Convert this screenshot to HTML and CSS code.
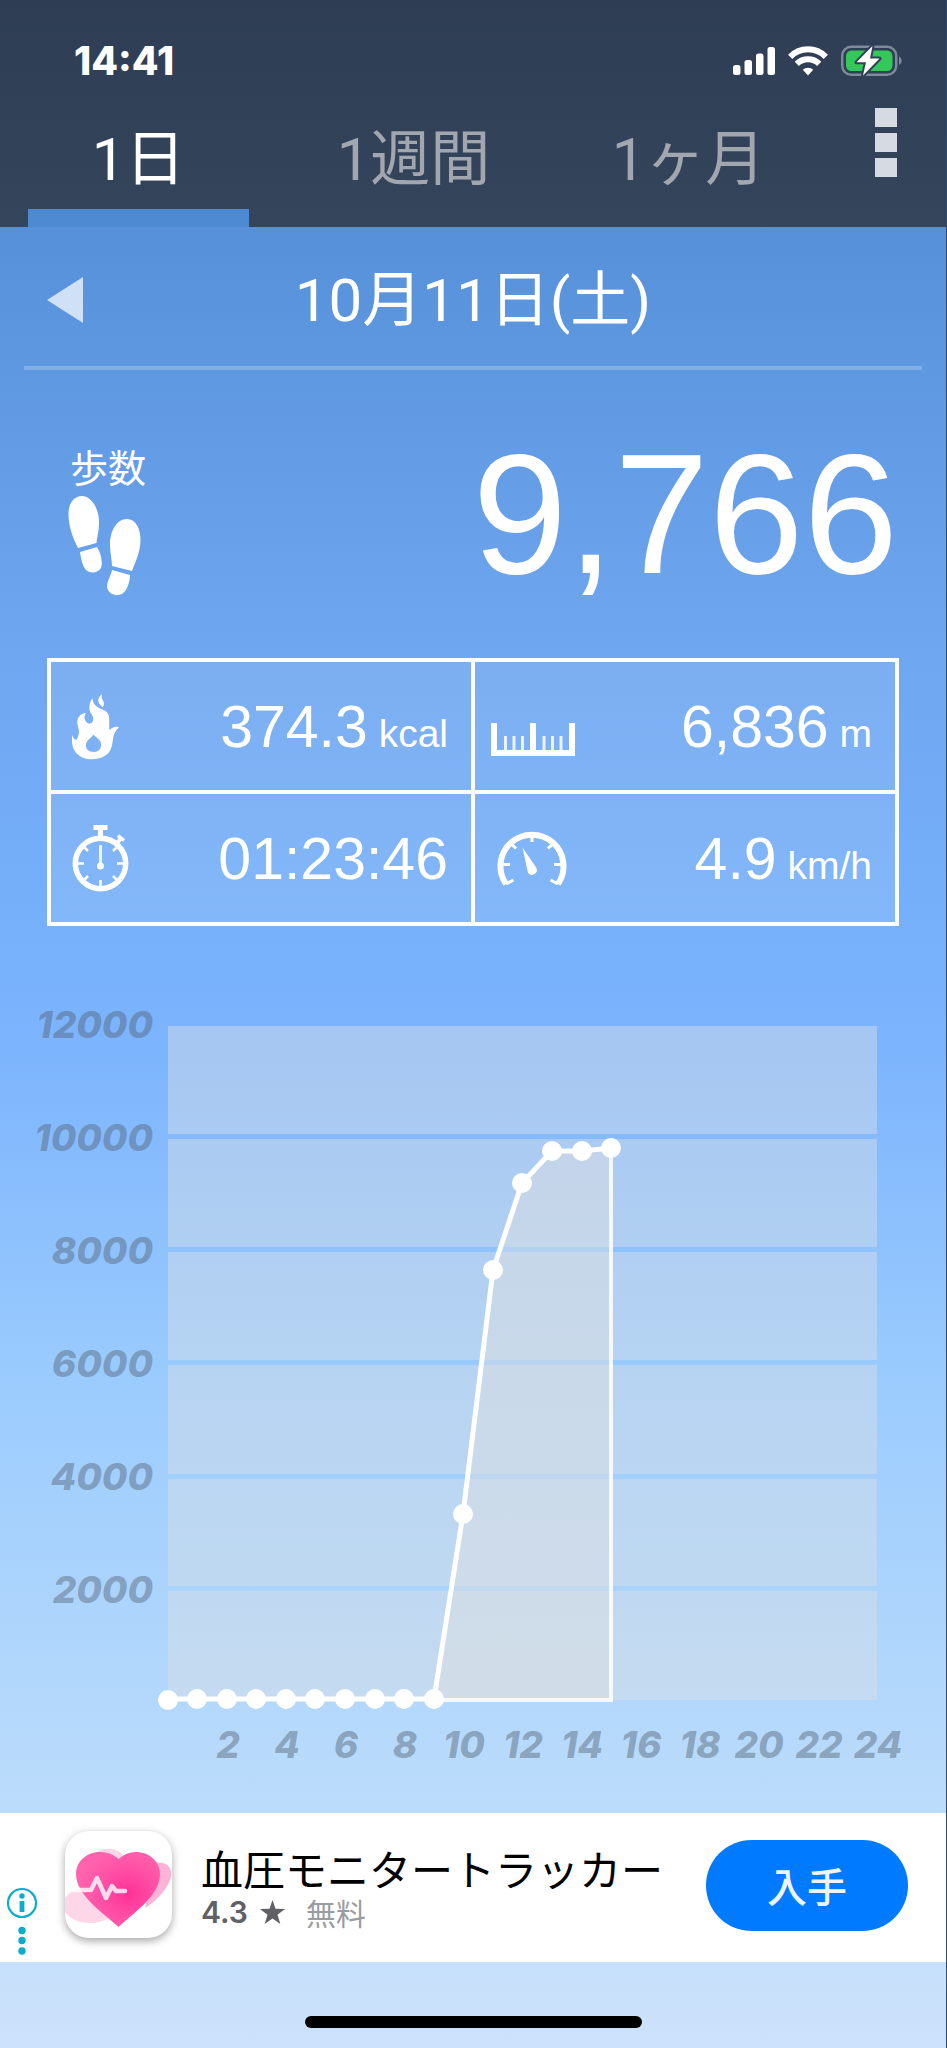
FILE: index.html
```html
<!DOCTYPE html>
<html lang="ja">
<head>
<meta charset="utf-8">
<meta name="viewport" content="width=device-width, initial-scale=1">
<title>歩数計</title>
<link rel="stylesheet" href="styles.css">
</head>
<body>
<div class="app">
  <header class="header">
    <div class="status">
      <time class="clock">14:41</time>
      <div class="indicators">
        <svg width="42" height="30" viewBox="0 0 42 30" fill="#fff" aria-label="電波"><rect x="0" y="19" width="7.500" height="10" rx="2.500"/><rect x="11.500" y="14" width="7.500" height="15" rx="2.500"/><rect x="23" y="7.500" width="7.500" height="21.500" rx="2.500"/><rect x="34.500" y="1" width="7.500" height="28" rx="2.500"/></svg>
        <svg width="40" height="30" viewBox="0 0 40 30" aria-label="Wi-Fi"><g fill="none" stroke="#fff" stroke-width="6"><path d="M2.200 10.800a25 25 0 0 1 35.600 0"/><path d="M8.800 17.800a16 16 0 0 1 22.400 0"/></g><path d="M20 29.500l-5.200-5.700a7.500 7.500 0 0 1 10.400 0z" fill="#fff"/></svg>
        <svg width="62" height="32" viewBox="0 0 62 32" aria-label="充電中"><rect x="1.200" y="1.700" width="54" height="28" rx="9" fill="none" stroke="#7f8a9a" stroke-width="2.400"/><path d="M58 11.500c3.500 1.500 3.500 7 0 8.500z" fill="#7f8a9a"/><rect x="5" y="5.500" width="46.500" height="20.500" rx="5.500" fill="#34c759"/><path d="M31.500 1L15.500 17.300h9.500L22 30.500 38.500 13.500h-9.500z" fill="#fff" stroke="#30425a" stroke-width="4" stroke-linejoin="round" paint-order="stroke"/></svg>
      </div>
    </div>
    <nav class="tabs">
      <button class="tab tab-active" type="button">1日</button>
      <button class="tab" type="button">1週間</button>
      <button class="tab" type="button">1ヶ月</button>
      <button class="menu" type="button" aria-label="メニュー"><span></span><span></span><span></span></button>
    </nav>
  </header>

  <main>
    <div class="datebar">
      <button class="prev" type="button" aria-label="前の日"><svg width="36" height="46" viewBox="0 0 36 46"><path d="M0 23L36 0v46z" fill="#cfe0f7"/></svg></button>
      <h1 class="date">10月11日(土)</h1>
    </div>

    <section class="steps">
      <div class="steps-label">
        <h2>歩数</h2>
        <svg width="74" height="100" viewBox="68 496 74 100" fill="#fff"><path d="M82 496C91 496 99 508 99 522C99 532 97 537 96.500 543L78 548C74 540 68.500 528 68.500 514C68.500 503 74 496 82 496Z"/><path d="M80 552L97 547C101 553 103 563 101 568C98 573 90 574 86 570C82 565 81 558 80 552Z"/><path d="M127 519C136 519 140.500 529 140.500 540C140.500 552 135 563 132 571L112 566C112 560 110 553 110 545C110 530 117 519 127 519Z"/><path d="M112 570L130 575C130 582 127 591 122 594C116 597 108 594 107 587C107 581 111 576 112 570Z"/></svg>
      </div>
      <p class="steps-count">9,766</p>
    </section>

    <section class="stats">
      <div class="stat">
        <div class="stat-icon"><svg width="47" height="67" viewBox="126 155 142 200" fill="#fff" fill-rule="evenodd"><path d="M188 170C178 182 176 200 181 212C190 224 194 235 186 244C178 250 166 244 164 230C163 222 166 216 170 214C152 214 140 228 142 246C146 262 150 272 144 286C142 296 136 298 132 292C129 288 127 284 126 280C124 300 126 318 138 334C152 350 172 354 186 354C214 354 234 342 242 326C250 310 248 296 252 282C256 270 262 262 268 257C256 254 246 258 240 266C236 256 240 240 238 226C236 212 226 206 214 202C198 196 188 186 188 170ZM190 279C186 290 168 296 168 312C168 326 178 332 192 332C206 332 215 322 214 308C212 292 200 290 190 279Z"/><path d="M217 157C208 164 203 172 206 180C208 188 214 190 218 197C224 192 224 182 219 176C215 170 215 164 217 157Z"/></svg></div>
        <p class="value">374.3<small> kcal</small></p>
      </div>
      <div class="stat">
        <div class="stat-icon stat-icon-ruler"><svg width="84" height="33" viewBox="0 0 84 33" fill="#fff"><path d="M0 0h6v27h33V0h6v27h33V0h6v33H0z"/><path d="M13 13h3v15h-3zM21.500 13h3v15h-3zM30 13h3v15h-3zM51.500 13h3v15h-3zM60 13h3v15h-3zM68.500 13h3v15h-3z" opacity=".85"/></svg></div>
        <p class="value">6,836<small> m</small></p>
      </div>
      <div class="stat">
        <div class="stat-icon"><svg width="57" height="67" viewBox="0 0 57 67" fill="none" stroke="#fff"><circle cx="28.500" cy="38.500" r="25.200" stroke-width="5.500"/><path d="M21.500 2.500h14M28.500 2v10" stroke-width="5"/><path d="M45 18l4.500-5.500" stroke-width="4"/><path d="M46 10.500l6 5" stroke-width="3.500"/><path d="M28.500 20v21" stroke-width="3" opacity=".85"/><path d="M6 38.500h6M45 38.500h6M28.500 55v6M12.500 22.500l3.500 3.500M44.500 22.500l-3.500 3.500M12.500 54.500l3.500-3.500M44.500 54.500l-3.500-3.500" stroke-width="2.500"/><circle cx="28.500" cy="41" r="3.500" fill="#fff" stroke="none"/></svg></div>
        <p class="value">01:23:46</p>
      </div>
      <div class="stat">
        <div class="stat-icon stat-icon-gauge"><svg width="70" height="57" viewBox="0 0 70 57" fill="none" stroke="#fff"><path d="M9 54A31.500 31.500 0 1 1 61 54" stroke-width="6"/><path d="M35 4v8M4 34.500h9M57 34.500h9M13 12.500l6 6M57 12.500l-6 6M9 54l7.500-4M61 54l-7.500-4" stroke-width="3"/><path d="M25.500 17.500L39.500 38A5 5 0 0 1 31 43Z" fill="#fff" stroke="none"/></svg></div>
        <p class="value">4.9<small> km/h</small></p>
      </div>
    </section>

    <svg class="chart" viewBox="0 926 946 887" role="img" aria-label="時間ごとの歩数">
      <g class="bands">
        <rect x="168" y="1026" width="709" height="108"/><rect x="168" y="1139" width="709" height="108"/><rect x="168" y="1252" width="709" height="108"/><rect x="168" y="1365" width="709" height="109"/><rect x="168" y="1479" width="709" height="107"/><rect x="168" y="1591" width="709" height="109"/>
      </g>
      <path class="area" d="M434 1699L463 1514L493 1270L522 1183L552 1150H582L611 1148V1699Z"/>
      <path class="edge" d="M434 1700H611V1148"/>
      <path class="line" d="M168 1699H434L463 1514L493 1270L522 1183L552 1151H582L611 1148"/>
      <g fill="#fff">
        <circle cx="168" cy="1700" r="10"/><circle cx="197" cy="1699" r="10"/><circle cx="227" cy="1699" r="10"/><circle cx="256" cy="1699" r="10"/><circle cx="286" cy="1699" r="10"/><circle cx="315" cy="1699" r="10"/><circle cx="345" cy="1699" r="10"/><circle cx="375" cy="1699" r="10"/><circle cx="404" cy="1699" r="10"/><circle cx="434" cy="1699" r="10"/><circle cx="463" cy="1514" r="10"/><circle cx="493" cy="1270" r="10"/><circle cx="522" cy="1183" r="10"/><circle cx="552" cy="1151" r="10"/><circle cx="582" cy="1151" r="10"/><circle cx="611" cy="1148" r="10"/>
      </g>
      <g class="axis axis-y">
        <text x="153" y="1038">12000</text><text x="153" y="1151">10000</text><text x="153" y="1264">8000</text><text x="153" y="1377">6000</text><text x="153" y="1490">4000</text><text x="153" y="1603">2000</text>
      </g>
      <g class="axis axis-x">
        <text x="228" y="1758">2</text><text x="287" y="1758">4</text><text x="346" y="1758">6</text><text x="405" y="1758">8</text><text x="464" y="1758">10</text><text x="523" y="1758">12</text><text x="582" y="1758">14</text><text x="641" y="1758">16</text><text x="700" y="1758">18</text><text x="759" y="1758">20</text><text x="819" y="1758">22</text><text x="878" y="1758">24</text>
      </g>
    </svg>
  </main>

  <aside class="ad">
    <button class="ad-info" type="button" aria-label="広告について"><svg width="32" height="70" viewBox="0 0 32 70" fill="#0cadcb"><circle cx="16" cy="16" r="14" fill="none" stroke="#0cadcb" stroke-width="2.200"/><circle cx="16" cy="9" r="2.700"/><path d="M13.600 14h4.800v11h-4.800z"/><circle cx="16" cy="43.500" r="3.700"/><circle cx="16" cy="53.500" r="3.700"/><circle cx="16" cy="64" r="3.700"/></svg></button>
    <svg class="ad-icon" viewBox="0 0 107 107">
      <defs><radialGradient id="heart" cx=".62" cy=".55" r=".6"><stop offset="0" stop-color="#ff2f96"/><stop offset=".5" stop-color="#ff4ea4"/><stop offset="1" stop-color="#ff63ae"/></radialGradient></defs>
      <ellipse cx="25" cy="74" rx="27" ry="18" fill="#fdd6e8"/>
      <path d="M30 22c10-7 22-5 28 2l-10 8z" fill="#fdd3e6"/>
      <path d="M90 32c10-2 18 4 16 14-3 12-15 24-26 31z" fill="#fdb3d5"/>
      <path d="M53.500 96C40 83 11 65 11 43C11 30 22 21 35 21C43 21 49 24 53.500 28C58 24 64 21 71 21C84 21 95 30 95 43C95 65 67 83 53.500 96Z" fill="url(#heart)"/>
      <path d="M9 59H26L32 47L41 67L47 55L51 60H60" fill="none" stroke="#fff" stroke-opacity=".8" stroke-width="4.500" stroke-linecap="round" stroke-linejoin="round"/>
    </svg>
    <div class="ad-text">
      <p class="ad-title">血圧モニタートラッカー</p>
      <p class="ad-meta"><b>4.3</b><svg width="25" height="24" viewBox="0 0 25 24" fill="#616165" aria-label="つ星"><path d="M12.500 0l3 8.700 9.500.3-7.500 5.700 2.800 9.300-7.800-5.500-7.800 5.500 2.800-9.300L0 9l9.500-.3z"/></svg><span>無料</span></p>
    </div>
    <button class="ad-get" type="button">入手</button>
  </aside>

  <footer class="home"><span class="home-bar"></span></footer>
</div>
</body>
</html>
```
FILE: styles.css
```css
* { box-sizing: border-box; }

body, h1, h2, p { margin: 0; }

body {
  font-family: "Liberation Sans", "Noto Sans CJK JP", sans-serif;
  color: #fff;
}

button {
  font: inherit;
  color: inherit;
  background: none;
  border: 0;
  padding: 0;
}

svg { display: block; }

.app {
  display: flex;
  flex-direction: column;
  min-height: 100vh;
  border-right: 1px solid #2f4a6b;
  background: linear-gradient(#4a84ca 0%, #5690d8 11%, #5f99e1 19%, #6ea6ef 31%, #77b1fb 46%, #7cb4fd 51%, #9acbfe 67%, #bbdcfb 88%, #cde2fb 100%);
}

.header { background: linear-gradient(#2e3d53, #34455c); }

.status {
  display: flex;
  align-items: center;
  justify-content: space-between;
  height: 96px;
  padding: 25px 43px 0 74px;
}

.clock {
  font: 800 39px/40px Inter, sans-serif;
}

.indicators {
  display: flex;
  align-items: center;
  gap: 13px;
}

.tabs {
  display: flex;
  gap: 54px;
  height: 131px;
  padding-left: 28px;
}

.tab {
  flex: 1;
  font-family: Roboto, "Noto Sans CJK JP", sans-serif;
  font-size: 60px;
  font-weight: 400;
  line-height: 90px;
  padding: 18px 0 4px;
  border-bottom: 18px solid transparent;
  color: #a2a6ae;
}

.tab-active {
  color: #fff;
  border-bottom-color: #4e8ad1;
}

.menu {
  display: flex;
  flex-direction: column;
  gap: 6px;
  width: 93px;
  padding: 12px 0 0 22px;
}

.menu span {
  width: 22px;
  height: 19px;
  background: #d6dae1;
}

.datebar {
  display: grid;
  grid-template-columns: 60px 1fr 60px;
  align-items: center;
  height: 143px;
  margin: 0 24px;
  border-bottom: 4px solid rgba(255, 255, 255, .22);
}

.prev { padding: 6px 0 0 23px; }

.date {
  font-family: Roboto, "Noto Sans CJK JP", sans-serif;
  font-size: 60px;
  font-weight: 400;
  line-height: 90px;
  padding-top: 8px;
  text-align: center;
}

.steps {
  display: flex;
  justify-content: space-between;
  padding: 77px 48px 0 68px;
  height: 288px;
}

.steps-label h2 {
  font-size: 38px;
  font-weight: 400;
  line-height: 44px;
  padding-left: 2px;
  margin-bottom: 5px;
}

.steps-count {
  font-size: 170px;
  line-height: 134px;
}

.stats {
  display: grid;
  grid-template-columns: 1fr 1fr;
  margin: 0 47px;
  border-top: 4px solid #fff;
  border-left: 4px solid #fff;
}

.stat {
  display: flex;
  align-items: center;
  justify-content: space-between;
  height: 132px;
  padding: 0 23px 0 21px;
  border-right: 4px solid #fff;
  border-bottom: 4px solid #fff;
  background: rgba(255, 255, 255, .09);
}

.stat:nth-child(even) { padding-left: 16px; }

.stat-icon-ruler { padding-top: 26px; }

.stat-icon-gauge { padding-left: 6px; }

.value {
  font-size: 59px;
  line-height: 70px;
  padding-top: 2px;
}

.value small {
  font-size: 39px;
  line-height: 1;
}

.chart { width: 100%; height: auto; }

.bands { fill: rgba(219, 223, 227, .44); }

.area { fill: rgba(224, 225, 224, .45); }

.edge {
  fill: none;
  stroke: rgba(255, 255, 255, .85);
  stroke-width: 4px;
}

.line {
  fill: none;
  stroke: #fff;
  stroke-width: 5px;
}

.axis {
  font: italic 800 37px Inter, sans-serif;
  fill: rgba(84, 97, 114, .45);
}

.axis-y { text-anchor: end; }

.axis-x { text-anchor: middle; }

.ad {
  display: flex;
  align-items: center;
  height: 149px;
  padding: 0 38px 0 6px;
  background: #fff;
}

.ad-info { padding-top: 68px; }

.ad-icon {
  width: 107px;
  height: 107px;
  margin: 0 29px 6px 27px;
  border-radius: 24px;
  background: #fff;
  box-shadow: 0 3px 8px rgba(0, 0, 0, .35);
}

.ad-text {
  flex: 1;
  font-family: "Noto Sans CJK JP", sans-serif;
}

.ad-title {
  font-size: 42px;
  line-height: 48px;
  color: #000;
}

.ad-meta {
  display: flex;
  align-items: center;
  font-size: 30px;
  line-height: 40px;
  color: #9a9ca3;
}

.ad-meta b {
  font-family: Inter, sans-serif;
  font-weight: 600;
  color: #616165;
  margin-right: 12px;
}

.ad-meta span { margin-left: 21px; }

.ad-get {
  width: 202px;
  height: 91px;
  margin-bottom: 5px;
  border-radius: 46px;
  background: #007aff;
  color: #eef4ff;
  font: 500 40px/60px "Noto Sans CJK JP", sans-serif;
}

.home {
  display: flex;
  justify-content: center;
  padding-top: 54px;
  height: 86px;
}

.home-bar {
  width: 337px;
  height: 12px;
  border-radius: 6px;
  background: #000;
}
```
